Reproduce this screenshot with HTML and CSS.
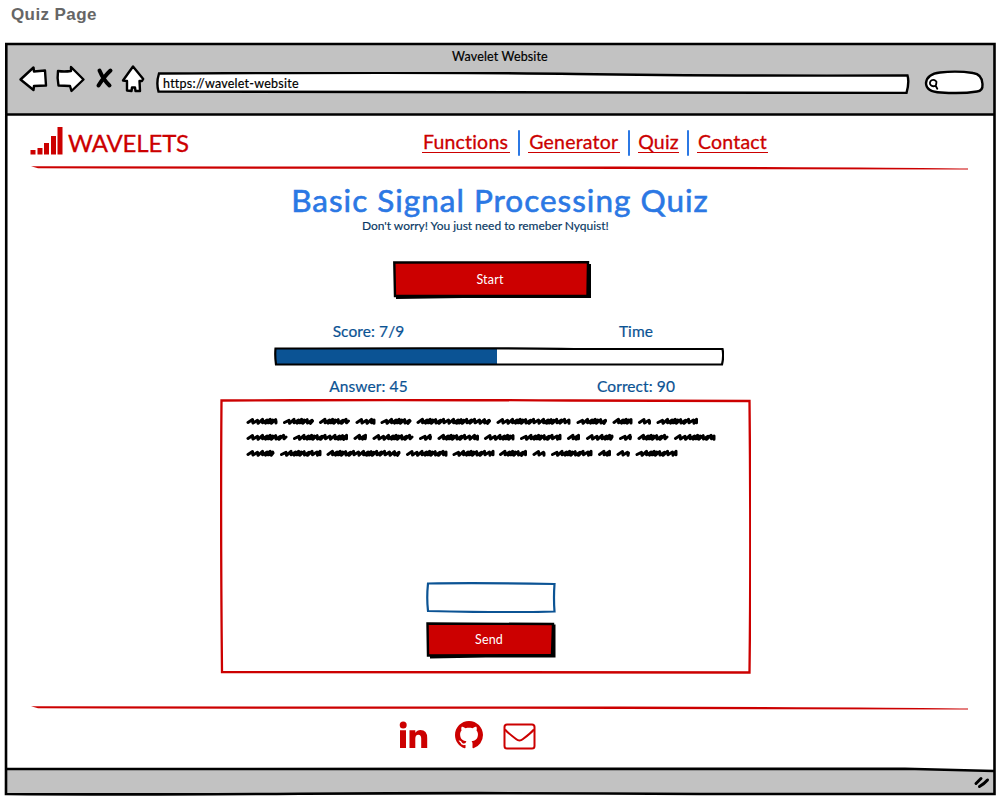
FILE: index.html
```
<!DOCTYPE html>
<html lang="en">
<head>
<meta charset="utf-8">
<title>Quiz Page</title>
<link rel="stylesheet" href="styles.css">
</head>
<body>
<h1 class="page-title">Quiz Page</h1>
<div class="browser">
  <header class="toolbar">
    <div class="window-title"><span>Wavelet Website</span></div>
    <div class="controls">
      <svg class="nav-icons" width="130" height="32" viewBox="16 63 130 32">
        <g fill="#fff" stroke="#000" stroke-width="2.4" stroke-linejoin="round" stroke-linecap="round">
          <path d="M20.5 79.5 L33.5 67.5 L34 71.5 L45 70.5 L46 85.5 L34 86 L33.5 90 Z"/>
          <path d="M58 71 Q64 72 71 71 L71 67 L83.5 79.5 L71.500 91 L70 86 L58.500 85.500 Q57 78 58 71 Z"/>
          <path d="M133 66.500 L143.200 79 L142 81 L139.500 81 L140 91 L135.500 91 L135 87.500 L132 87.500 L131.500 91 L127 90.500 L127 81 L123 80.500 Z"/>
        </g>
        <path d="M99.500 70.500 Q103.500 80 109.500 85.500 M110.500 70.500 Q104.500 76 98.500 85.500" fill="none" stroke="#000" stroke-width="4" stroke-linecap="round"/>
      </svg>
      <div class="address">
        <svg class="outline" viewBox="0 0 754 22"><path d="M3 1.500 Q300 0 420 2 T751.500 3.500 Q753.500 10 750.500 21 Q300 19.500 2.500 19.500 Q0 11 3 1.500 Z" fill="#fff" stroke="#000" stroke-width="2.400"/></svg>
        <span class="url">https://wavelet-website</span>
      </div>
      <svg class="search" width="62" height="28" viewBox="923 69 62 28">
        <path d="M926 83 Q927 74 940 72.500 Q957 70.500 973 73 Q982 74 982.500 84 Q983 91 977 91.500 Q962 94 941 92.500 Q926 92 926 83 Z" fill="#fff" stroke="#000" stroke-width="2.400"/>
        <path d="M936.500 82 A3.400 3.200 0 1 0 936 85 L936.500 82 M935.500 85.500 L937.300 88.800" fill="none" stroke="#000" stroke-width="1.800" stroke-linecap="round"/>
      </svg>
    </div>
  </header>
  <main class="content">
    <div class="site-header">
      <svg class="logo" width="33" height="28" viewBox="30 127 33 28" fill="#c00"><path d="M30.500 150h5v4.500h-5zM37.500 148h5v6.500h-5zM44 143h5v11.500h-5zM51 136h5v18.500h-5zM57.500 127h5v27.500h-5z"/></svg>
      <span class="brand">WAVELETS</span>
      <nav class="site-nav">
        <a class="w-functions">Functions</a><i></i><a class="w-generator">Generator</a><i></i><a class="w-quiz">Quiz</a><i></i><a class="w-contact">Contact</a>
      </nav>
    </div>
    <svg class="rule" width="940" height="5" viewBox="0 0 940 5"><path d="M1 .300 L590 .600 Q850 1 938 2.500 V3.500 L590 2.900 Q200 2.800 8 2.300 Z" fill="#c00"/></svg>
    <section class="quiz">
      <h2 class="quiz-title">Basic Signal Processing Quiz</h2>
      <p class="quiz-hint">Don't worry! You just need to remeber Nyquist!</p>
      <button class="button start">
        <svg class="outline" viewBox="0 0 198 38"><path d="M3 5 L198 3 L198 37 L70 37 L3 38 Z"/><path d="M1.300 1.500 L195 1.300 L194.500 35 L2 35 Z" fill="#c00" stroke="#000" stroke-width="2.400"/></svg>
        <span>Start</span>
      </button>
      <div class="stats score-row"><span class="w-score">Score: 7/9</span><span class="w-time">Time</span></div>
      <div class="progress">
        <div class="progress-fill"></div>
        <svg class="outline" viewBox="0 0 450 19"><path d="M1.500 1.500 Q230 .800 300 2 L448.500 2 Q450 9 448 17.500 Q160 18.200 2 17.500 Q.800 9 1.500 1.500 Z" fill="none" stroke="#000" stroke-width="2.200"/></svg>
      </div>
      <div class="stats answer-row"><span class="w-answer">Answer: 45</span><span class="w-correct">Correct: 90</span></div>
      <div class="panel">
        <svg class="outline" viewBox="0 0 531 275"><path d="M1.500 1.500 Q160 .500 350 1.500 L529.500 2 Q531 150 529.500 273.500 Q200 272.500 2 273 Q.500 120 1.500 1.500 Z" fill="none" stroke="#c00" stroke-width="2.300"/></svg>
        <svg class="question" width="480" height="50" viewBox="242 412 480 50" aria-label="Question text"></svg>
        <div class="answer-input"><svg class="outline" viewBox="0 0 130 31"><path d="M2 1.500 Q50 .500 128.500 2 Q127.500 16 128.500 29.500 Q80 31 2 29 Q.500 16 2 1.500 Z" fill="none" stroke="#0b5394" stroke-width="2.200"/></svg></div>
        <button class="button send">
          <svg class="outline" viewBox="0 0 130 37"><path d="M4 4 L129.500 2.500 L129.500 35.500 L60 35.500 L4 36.500 Z"/><path d="M1.500 1.500 L127 2 L126 33 L2 33.500 Z" fill="#c00" stroke="#000" stroke-width="2.400"/></svg>
          <span>Send</span>
        </button>
      </div>
    </section>
    <svg class="rule" width="940" height="5" viewBox="0 0 940 5"><path d="M1 .300 L590 .600 Q850 1 938 2.500 V3.500 L590 2.900 Q200 2.800 8 2.300 Z" fill="#c00"/></svg>
    <footer class="social">
      <svg width="29" height="28" viewBox="0 0 29 28" fill="#c00"><circle cx="4.200" cy="3.900" r="3.500"/><path d="M1 9.300h6V27H1zM10.500 9.300h5.800v2.500Q18 8.900 21.500 8.900q6.700 0 6.700 8V27h-6v-9.500q0-3.800-2.900-3.800-3 0-3 4V27h-5.800z"/></svg>
      <svg width="28" height="28" viewBox="0 0 16 16" fill="#c00"><path d="M8 0C3.580 0 0 3.580 0 8c0 3.540 2.290 6.530 5.470 7.590.4.070.55-.17.55-.38 0-.19-.01-.82-.01-1.490-2.010.37-2.530-.49-2.690-.94-.09-.23-.48-.94-.82-1.130-.28-.15-.68-.52-.01-.53.63-.01 1.080.58 1.230.82.72 1.210 1.870.87 2.330.66.07-.52.28-.87.51-1.070-1.780-.2-3.640-.89-3.640-3.950 0-.87.31-1.590.82-2.150-.08-.2-.36-1.020.08-2.120 0 0 .67-.21 2.200.82.64-.18 1.320-.27 2-.27s1.360.09 2 .27c1.530-1.040 2.200-.82 2.200-.82.44 1.100.16 1.920.08 2.120.51.56.82 1.270.82 2.150 0 3.070-1.870 3.750-3.650 3.950.29.25.54.73.54 1.480 0 1.070-.01 1.930-.01 2.200 0 .21.15.46.55.38A8.010 8.010 0 0 0 16 8c0-4.420-3.580-8-8-8"/></svg>
      <svg width="33" height="27" viewBox="0 0 33 27" fill="none" stroke="#c00" stroke-width="2"><rect x="1.500" y="1.500" width="30" height="24" rx="2.500"/><path d="M2 6.500Q5 10 13 16q3.500 3 7 0 8-6 11-9.500"/></svg>
    </footer>
  </main>
  <div class="status-bar">
    <svg width="18" height="14" viewBox="0 0 18 14" fill="none" stroke="#000" stroke-width="3" stroke-linecap="round"><path d="M3 8.500L8 3.500M6.500 11.500Q11 9 14.500 5"/></svg>
  </div>
  <svg class="frame" viewBox="0 0 1005 802" fill="none" stroke="#000" stroke-width="2.600">
    <path d="M6 769 L900 768.800 L994 771 L994 764 L7.500 764 Z" fill="#fff" stroke="none"/>
    <path d="M6.300 44 Q500 42.800 994.500 44 Q993.500 400 994.500 794 L700 794 Q500 792.500 300 793.700 T6 794 Q5 500 6.300 44 Z M6 114.500 Q400 115.800 994 114.500"/>
    <path d="M6 769 L905 768.800 L994 771"/>
  </svg>
</div>
<script src="script.js"></script>
</body>
</html>
```

FILE: styles.css
```
* { box-sizing: border-box; }
body { margin: 0; width: 1005px; height: 802px; overflow: hidden; background: #fff; font-family: Lato, "Open Sans", sans-serif; color: #000; font-variant-ligatures: none; }
svg { display: block; flex: none; }
span, a, h2, p { white-space: nowrap; }
.page-title { margin: 0; height: 44px; padding: 5px 0 0 11px; font: bold 17px/20px "Liberation Sans", sans-serif; color: #666; letter-spacing: .4px; }
.browser { position: relative; display: flex; flex-direction: column; width: 988px; height: 750px; margin-left: 6px; }
.frame { position: absolute; left: -6px; top: -44px; width: 1005px; height: 802px; pointer-events: none; }
.outline { position: absolute; inset: 0; width: 100%; height: 100%; }

.toolbar { height: 71px; background: #c2c2c2; }
.window-title { height: 24px; display: flex; justify-content: center; font-size: 12.5px; line-height: 25px; letter-spacing: .15px; -webkit-text-stroke: .2px; }
.controls { display: flex; align-items: flex-start; padding-left: 10px; }
.nav-icons { margin-top: -5px; }
.address { position: relative; width: 754px; height: 22px; margin: 4px 0 0 10px; padding-left: 7px; }
.url { position: relative; font-size: 12.5px; line-height: 21px; letter-spacing: .25px; -webkit-text-stroke: .2px; }
.search { margin: 1px 0 0 13px; }

.content { height: 654px; padding-left: 24px; }
.site-header { display: flex; height: 51px; padding-top: 12px; color: #c00; }
.brand { width: 120px; margin-left: 5px; font-size: 24px; line-height: 31px; letter-spacing: -.15px; -webkit-text-stroke: .3px; }
.site-nav { display: flex; margin-left: 233.5px; font-size: 19.500px; line-height: 30px; letter-spacing: .2px; -webkit-text-stroke: .3px; }
.site-nav a { height: 26px; border-bottom: 1px solid #c00; text-align: center; }
.site-nav i { width: 2px; height: 26px; margin: 3px 8px 0; background: #2b78e4; border-radius: 1px; }
.w-functions { width: 88px; }
.w-generator { width: 92.5px; }
.w-quiz { width: 41px; }
.w-contact { width: 71px; }

.quiz { height: 535px; padding-left: 190px; }
.quiz-title { width: 418px; height: 43px; margin: 0 0 0 71px; padding-top: 10px; font-size: 31.500px; line-height: 38px; font-weight: 400; letter-spacing: 1px; color: #2b78e4; text-align: center; -webkit-text-stroke: .6px; }
.quiz-hint { width: 246px; height: 17px; margin: 3px 0 0 142px; font-size: 12px; line-height: 17px; color: #073763; text-align: center; letter-spacing: -.03px; -webkit-text-stroke: .15px; }
.button { position: relative; display: block; padding: 0; border: 0; background: none; color: #fff; font: 12.500px/20px Lato, "Open Sans", sans-serif; text-align: center; letter-spacing: .2px; }
.button span { position: relative; }
.start { width: 198px; height: 38px; margin: 27px 0 0 173px; padding-right: 4px; }
.stats { display: flex; justify-content: space-between; color: #0b5394; font-size: 15.500px; line-height: 20px; letter-spacing: .1px; -webkit-text-stroke: .2px; }
.stats span { text-align: center; }
.score-row { width: 322px; margin: 22px 0 0 112px; }
.w-score { width: 73px; }
.w-time { width: 36px; }
.progress { position: relative; width: 450px; height: 19px; margin: 6px 0 0 54px; padding: 2px; }
.progress-fill { width: 221px; height: 15px; background: #0b5394; }
.answer-row { width: 347px; margin: 10px 0 0 109px; }
.w-answer { width: 79px; }
.w-correct { width: 80px; }
.panel { position: relative; width: 531px; height: 275px; margin-top: 3px; padding: 13px 0 0 22px; }
.answer-input { position: relative; width: 130px; height: 31px; margin: 120px 0 0 184px; }
.send { width: 130px; height: 37px; margin: 9px 0 0 184px; padding-right: 4px; padding-bottom: 2px; }

.social { display: flex; padding: 9px 0 0 369px; }
.social svg:nth-child(1) { margin-top: 1px; }
.social svg:nth-child(2) { margin: 1px 0 0 27px; }
.social svg:nth-child(3) { margin: 3px 0 0 20px; }
.status-bar { height: 25px; display: flex; justify-content: flex-end; padding: 6px 3px 0 0; background: #c2c2c2; }
```

FILE: script.js
```
// Scribbled placeholder words, as [start, end] pairs for each line.
const lines = [
  [421, [[246.5,277.5],[283,314],[319,350],[355.5,375.5],[380.5,411.5],[416.5,491],[496.5,570.5],[576.5,607],[612.5,632.5],[638,651],[656.5,698]]],
  [437, [[246.5,287.5],[293,348],[353.5,367],[372.5,413.5],[419,432],[437.5,479],[484,514.5],[520,561.5],[567,580],[586,613.5],[619,632],[637.5,668.5],[674,715.5]]],
  [453, [[246.5,274.5],[280,321.5],[326.5,400.5],[406,447.5],[452.5,494.5],[499,527],[532.5,545.5],[551,592.5],[598,611],[616.5,630],[635.5,677.5]]]
];
const steps = [5, 5, 4.6, 3, 2.6, 3, 4.8, 3];
const dips = [0, 0.7, -0.3, 0.4, -0.3, 0.5];
let d = "";
for (const [y, words] of lines) {
  words.forEach(([a, b], w) => {
    d += `M${a + 1.5} ${y + 1.5}`;
    let k = w % 3;
    for (let x = a + 1.5; x < b - 3.5; k++) {
      const step = steps[k % 8];
      const j = dips[k % 6];
      const top = Math.min(x + 4.5, b - 1.5);
      d += `L${top} ${y - 1.4 + j}L${Math.min(x + step, b - 1.5)} ${y + 2 + j * 0.5}`;
      x += step;
    }
    d += `L${b - 1.5} ${y}`;
  });
}
const path = document.createElementNS("http://www.w3.org/2000/svg", "path");
path.setAttribute("d", d);
path.setAttribute("fill", "none");
path.setAttribute("stroke", "#000");
path.setAttribute("stroke-width", "3");
path.setAttribute("stroke-linecap", "round");
path.setAttribute("stroke-linejoin", "round");
document.querySelector(".question").append(path);
```
